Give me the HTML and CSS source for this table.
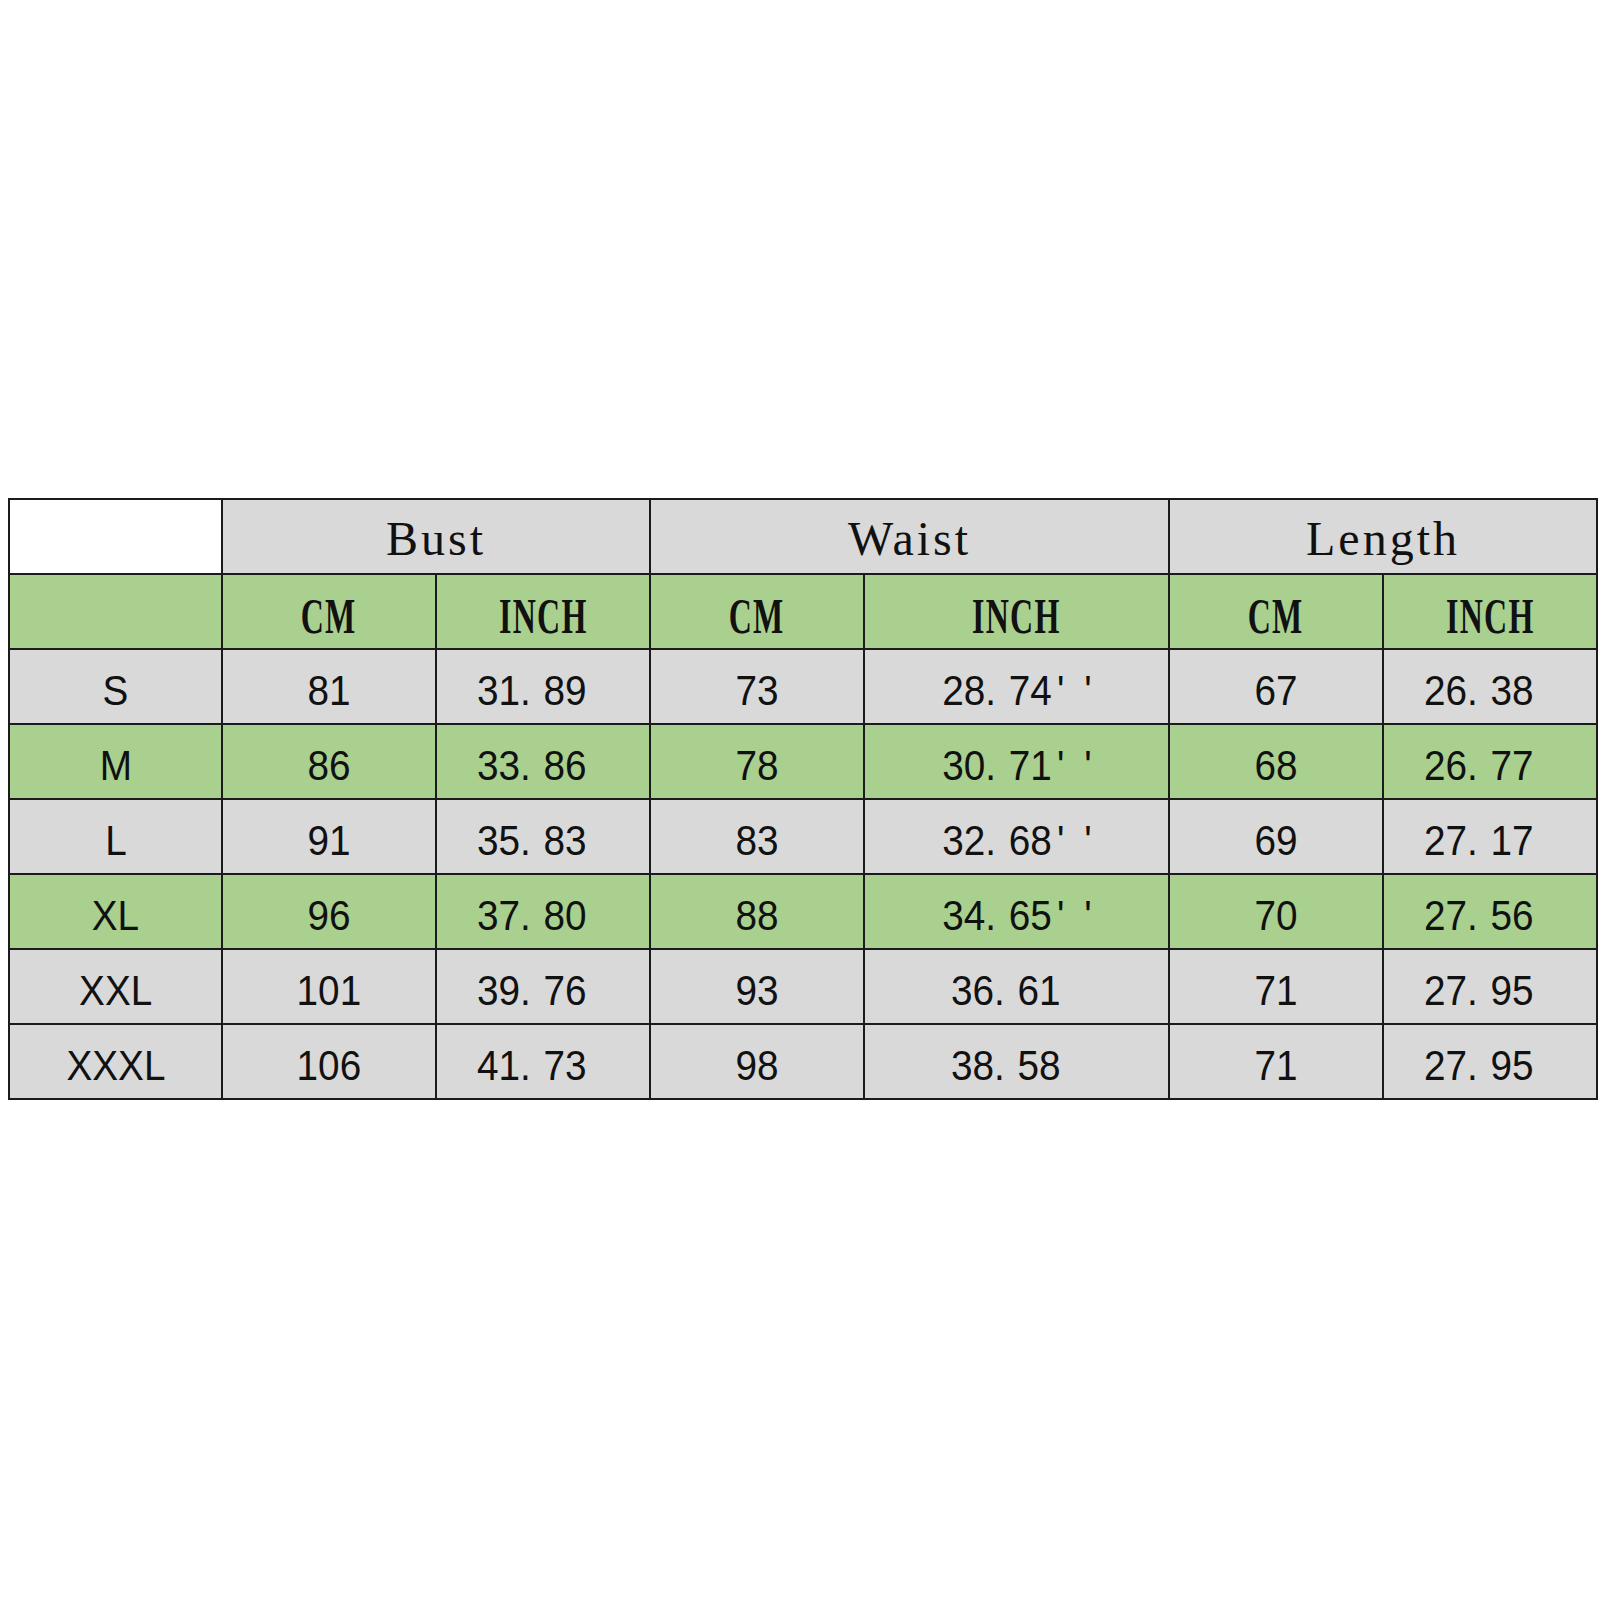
FILE: index.html
```html
<!DOCTYPE html>
<html>
<head>
<meta charset="utf-8">
<link rel="stylesheet" href="styles.css">
</head>
<body>
<div class="page">
<table class="size">
  <colgroup>
    <col class="c-size"><col class="c-n"><col class="c-n"><col class="c-n"><col class="c-w"><col class="c-n"><col class="c-n">
  </colgroup>
  <tr class="r-title">
    <td class="blank"></td>
    <td colspan="2" class="grp">Bust</td>
    <td colspan="2" class="grp">Waist</td>
    <td colspan="2" class="grp">Length</td>
  </tr>
  <tr class="green r-unit">
    <td></td>
    <td><span class="u">CM</span></td><td><span class="u">INCH</span></td>
    <td><span class="u">CM</span></td><td><span class="u">INCH</span></td>
    <td><span class="u">CM</span></td><td><span class="u">INCH</span></td>
  </tr>
  <tr class="grey">
    <td><span class="v">S</span></td><td><span class="v">81</span></td><td class="tr"><span class="v">31. 89</span></td><td><span class="v">73</span></td><td><span class="v">28. 74<span class="q">' '</span></span></td><td><span class="v">67</span></td><td class="tr"><span class="v">26. 38</span></td>
  </tr>
  <tr class="green">
    <td><span class="v">M</span></td><td><span class="v">86</span></td><td class="tr"><span class="v">33. 86</span></td><td><span class="v">78</span></td><td><span class="v">30. 71<span class="q">' '</span></span></td><td><span class="v">68</span></td><td class="tr"><span class="v">26. 77</span></td>
  </tr>
  <tr class="grey">
    <td><span class="v">L</span></td><td><span class="v">91</span></td><td class="tr"><span class="v">35. 83</span></td><td><span class="v">83</span></td><td><span class="v">32. 68<span class="q">' '</span></span></td><td><span class="v">69</span></td><td class="tr"><span class="v">27. 17</span></td>
  </tr>
  <tr class="green">
    <td><span class="v">XL</span></td><td><span class="v">96</span></td><td class="tr"><span class="v">37. 80</span></td><td><span class="v">88</span></td><td><span class="v">34. 65<span class="q">' '</span></span></td><td><span class="v">70</span></td><td class="tr"><span class="v">27. 56</span></td>
  </tr>
  <tr class="grey">
    <td><span class="v">XXL</span></td><td><span class="v">101</span></td><td class="tr"><span class="v">39. 76</span></td><td><span class="v">93</span></td><td class="tr"><span class="v">36. 61</span></td><td><span class="v">71</span></td><td class="tr"><span class="v">27. 95</span></td>
  </tr>
  <tr class="grey">
    <td><span class="v">XXXL</span></td><td><span class="v">106</span></td><td class="tr"><span class="v">41. 73</span></td><td><span class="v">98</span></td><td class="tr"><span class="v">38. 58</span></td><td><span class="v">71</span></td><td class="tr"><span class="v">27. 95</span></td>
  </tr>
</table>
</div>
</body>
</html>
```

FILE: styles.css
```css
html, body {
  margin: 0;
  padding: 0;
  background: #ffffff;
}
.page {
  padding: 498px 0 0 8px;
}
.size {
  border-collapse: collapse;
  table-layout: fixed;
  width: 1589px;
  color: #111;
}
.c-size { width: 213px; }
.c-n { width: 214px; }
.c-w { width: 305px; }
.size tr {
  height: 75px;
}
.size td {
  border: 2px solid #1b1b1b;
  padding: 8px 0 0 0;
  text-align: center;
  vertical-align: middle;
  font-family: "Liberation Sans", Arial, sans-serif;
  font-size: 43px;
  line-height: 1;
  white-space: nowrap;
}
.r-title td { background: #d9d9d9; }
.r-title td.blank { background: #ffffff; }
.size td.grp {
  font-family: "Liberation Serif", "Times New Roman", serif;
  font-size: 48px;
  letter-spacing: 3px;
  padding-top: 4px;
}
.green td { background: #a9d08e; }
.grey td { background: #d9d9d9; }
.u {
  display: inline-block;
  font-family: "Liberation Serif", "Times New Roman", serif;
  font-weight: bold;
  font-size: 50px;
  letter-spacing: 2px;
  transform: scaleX(0.64);
}
.v {
  display: inline-block;
  transform: scaleX(0.9);
  word-spacing: 2px;
}
.q {
  margin-left: 6px;
  word-spacing: 10px;
}
.size td.tr {
  padding-right: 22px;
}
```
